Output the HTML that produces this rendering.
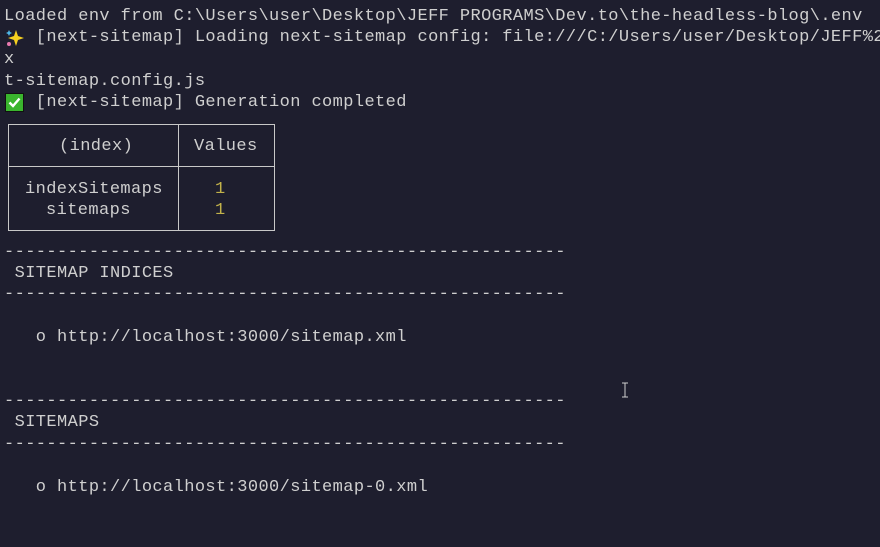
<!DOCTYPE html>
<html><head><meta charset="utf-8"><style>
html,body{margin:0;padding:0;background:#1e1e2e;width:880px;height:547px;overflow:hidden}
.l{position:absolute;left:4px;white-space:pre;font-family:"Liberation Mono","DejaVu Sans Mono",monospace;font-size:17px;letter-spacing:0.4px;color:#cfcfcf;line-height:21px;height:21px}
.y{color:#c2b24a}
.b{position:absolute;background:#c8c8c8}
</style></head><body>
<div class="l" style="top:6px">Loaded env from C:\Users\user\Desktop\JEFF PROGRAMS\Dev.to\the-headless-blog\.env</div>
<div class="l" style="top:27px">   [next-sitemap] Loading next-sitemap config: file:///C:/Users/user/Desktop/JEFF%2</div>
<svg style="position:absolute;left:5px;top:28px" width="20" height="20" viewBox="0 0 20 20"><path d="M11 2 L13 8 L19 10 L13 12 L11 18 L9 12 L3 10 L9 8 Z" fill="#f5d020"/><path d="M4 2 L5 4 L7 5 L5 6 L4 8 L3 6 L1 5 L3 4Z" fill="#4fb8e8"/><circle cx="4" cy="16" r="2" fill="#e87ab0"/></svg>
<div class="l" style="top:49px">x</div>
<div class="l" style="top:71px">t-sitemap.config.js</div>
<div class="l" style="top:92px">   [next-sitemap] Generation completed</div>
<svg style="position:absolute;left:5px;top:93px" width="19" height="19" viewBox="0 0 19 19"><rect x="0" y="0" width="19" height="19" fill="#111"/><rect x="1" y="1" width="17" height="17" fill="#3ab52e"/><path d="M4.5 9.5 L8 13 L14.5 5.5" stroke="#fff" stroke-width="2.4" fill="none"/></svg>
<div class="b" style="left:8px;top:124px;width:267px;height:1px"></div>
<div class="b" style="left:8px;top:166px;width:267px;height:1px"></div>
<div class="b" style="left:8px;top:230px;width:267px;height:1px"></div>
<div class="b" style="left:8px;top:124px;width:1px;height:107px"></div>
<div class="b" style="left:178px;top:124px;width:1px;height:107px"></div>
<div class="b" style="left:274px;top:124px;width:1px;height:107px"></div>
<div class="l" style="left:59px;top:136px">(index)</div>
<div class="l" style="left:194px;top:136px">Values</div>
<div class="l" style="left:25px;top:179px">indexSitemaps</div>
<div class="l" style="left:46px;top:200px">sitemaps</div>
<div class="l y" style="left:215px;top:179px">1</div>
<div class="l y" style="left:215px;top:200px">1</div>
<div class="l" style="top:242px">-----------------------------------------------------</div>
<div class="l" style="top:263px"> SITEMAP INDICES</div>
<div class="l" style="top:284px">-----------------------------------------------------</div>
<div class="l" style="top:327px">   o http://localhost:3000/sitemap.xml</div>
<div class="l" style="top:391px">-----------------------------------------------------</div>
<div class="l" style="top:412px"> SITEMAPS</div>
<div class="l" style="top:434px">-----------------------------------------------------</div>
<div class="l" style="top:477px">   o http://localhost:3000/sitemap-0.xml</div>
<svg style="position:absolute;left:620px;top:382px" width="10" height="16" viewBox="0 0 10 16"><path d="M2 1 H8 M5 1 V15 M2 15 H8" stroke="#cfcfcf" stroke-width="1" fill="none"/></svg>
</body></html>
